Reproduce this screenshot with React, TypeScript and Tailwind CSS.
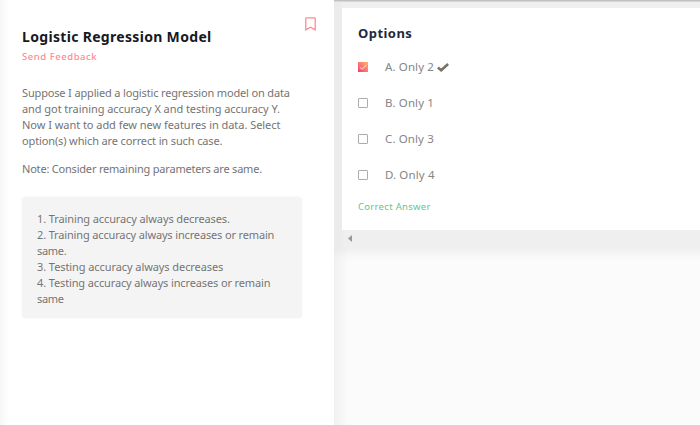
const options = [
  { label: 'A. Only 2', checked: true },
  { label: 'B. Only 1', checked: false },
  { label: 'C. Only 3', checked: false },
  { label: 'D. Only 4', checked: false },
];

function Checkbox({ checked }: { checked: boolean }) {
  if (!checked) {
    return <span className="block size-[10px] rounded-[1px] border border-[#acacac] bg-white" />;
  }
  return (
    <span className="block size-[10px] bg-linear-to-tr from-[#f52d76] to-[#ffb261]">
      <svg viewBox="0 0 10 10" className="block size-[10px]" fill="none" stroke="#fff" strokeOpacity=".8" strokeWidth="1">
        <path d="M1.7 5.2 4 7.2 8.3 3.2" />
      </svg>
    </span>
  );
}

export default function App() {
  return (
    <div className="flex h-[425px] w-[700px] overflow-hidden bg-[#fbfbfb] font-['Noto_Sans',sans-serif] text-[#747474]">
      <section className="relative z-10 flex w-[334px] shrink-0 flex-col bg-white bg-linear-to-r from-[#f7f7f7] to-white to-[9px] pl-[22px]">
        <header className="flex justify-between pr-[18px]">
          <div className="pt-[27px]">
            <h1 className="h-5 whitespace-nowrap text-[14px] leading-5 font-bold tracking-[0.32px] text-[#16191f]">Logistic Regression Model</h1>
            <p className="mt-[3px] h-[14px] text-[9.5px] leading-[14px] font-medium tracking-[0.54px] text-[#ff8a8f]">Send Feedback</p>
          </div>
          <svg viewBox="0 0 11 14" className="mt-[17px] h-[14px] w-[11px]" fill="none" stroke="#ff8a8f" strokeWidth="1.3">
            <path d="M.8 1.4Q.8.8 1.4.8H9.6Q10.2.8 10.2 1.4V12.8L5.5 10.3.8 12.8Z" />
          </svg>
        </header>
        <div className="mt-[21px] whitespace-nowrap text-[11px] leading-4">
          <p className="tracking-[-0.155px]">Suppose I applied a logistic regression model on data</p>
          <p className="tracking-[-0.06px]">and got training accuracy X and testing accuracy Y.</p>
          <p className="tracking-[-0.04px]">Now I want to add few new features in data. Select</p>
          <p className="tracking-[-0.13px]">option(s) which are correct in such case.</p>
          <p className="mt-3 tracking-[-0.2px]">Note: Consider remaining parameters are same.</p>
        </div>
        <div className="mt-5 h-[121px] w-[280px] rounded-[4px] bg-[#f4f4f4] pt-[14px] pl-[15px] whitespace-nowrap text-[11px] leading-4 shadow-[0_0_3px_#0000000d]">
          <p className="tracking-[-0.11px]">1. Training accuracy always decreases.</p>
          <p className="tracking-[-0.15px]">2. Training accuracy always increases or remain</p>
          <p className="tracking-[-0.3px]">same.</p>
          <p className="tracking-[-0.08px]">3. Testing accuracy always decreases</p>
          <p className="tracking-[-0.13px]">4. Testing accuracy always increases or remain</p>
          <p className="tracking-[-0.3px]">same</p>
        </div>
      </section>
      <main className="flex flex-1 flex-col bg-linear-to-r from-[#f0f0f0] to-[#fbfbfb] to-[14px]">
        <div className="h-px shrink-0 bg-[#c4c4c4]" />
        <div className="h-px shrink-0 bg-[#dcdcdc]" />
        <div className="-mr-6 h-[246px] shrink-0 bg-[#efefef] bg-linear-to-r from-[#ebebeb] from-[6px] to-[#efefef] to-[10px] pt-[6px] pl-2 shadow-[0_3px_12px_#00000012]">
          <div className="h-[222px] bg-white pt-[15px] pl-4">
            <h2 className="h-5 text-[13px] leading-5 font-bold tracking-[0.45px] text-[#252839]">Options</h2>
            <ul className="mt-[6px]">
              {options.map((option) => (
                <li key={option.label} className="flex h-9 items-center">
                  <Checkbox checked={option.checked} />
                  <span className="ml-[17px] text-[11.5px] leading-4 tracking-[0.12px] text-[#858585]">{option.label}</span>
                  {option.checked && (
                    <svg viewBox="0 0 12 9" className="ml-[3px] h-[9px] w-3" fill="none" stroke="#77736b" strokeWidth="2.6">
                      <path d="M.9 4.5 4.2 7.3 11.1 1" />
                    </svg>
                  )}
                </li>
              ))}
            </ul>
            <p className="mt-[7px] text-[9.5px] leading-[14px] tracking-[0.3px] text-[#62c68d]">Correct Answer</p>
          </div>
          <svg viewBox="0 0 4 7" className="mt-[5px] ml-[6px] h-[7px] w-1" fill="#999">
            <path d="M4 0V7L0 3.5Z" />
          </svg>
        </div>
      </main>
    </div>
  );
}
